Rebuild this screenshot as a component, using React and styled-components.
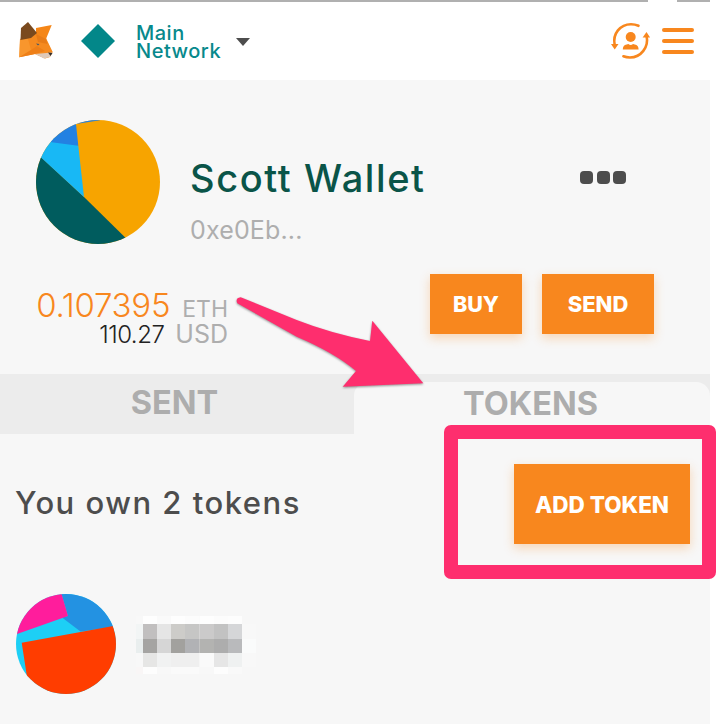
import React from "react";
import styled, { createGlobalStyle } from "styled-components";

const Global = createGlobalStyle`
  html, body { margin: 0; padding: 0; background: #fff; }
  * { box-sizing: border-box; }
`;

const ORANGE = "#f8871e";
const PINK = "#fe2e6e";
const font = `Inter, "Liberation Sans", sans-serif`;

const Page = styled.div`
  position: relative;
  width: 716px;
  height: 724px;
  overflow: hidden;
  background: #fff;
  font-family: ${font};
`;
const TopEdge = styled.div`
  display: flex;
  height: 2px;
`;
const EdgeSegment = styled.div`
  width: ${(p) => p.$w}px;
  height: 2px;
  background: ${(p) => (p.$on ? "#b0b0b0" : "transparent")};
`;
const Header = styled.header`
  display: flex;
  align-items: center;
  height: 78px;
  padding: 0 22px 0 19px;
`;
const LogoGroup = styled.div`
  display: flex;
  align-items: center;
`;
const FoxMark = styled.svg`
  filter: blur(0.35px);
`;
const DiamondMark = styled.svg`
  margin-left: 27px;
`;
const NetworkName = styled.div`
  margin-left: 21px;
  padding-top: 2px;
  width: 99px;
  font-size: 20px;
  line-height: 18px;
  font-weight: 500;
  color: #07898c;
  letter-spacing: 0.5px;
`;
const Caret = styled.div`
  width: 0;
  height: 0;
  margin-left: 1px;
  margin-top: 2px;
  border-left: 7px solid transparent;
  border-right: 7px solid transparent;
  border-top: 8px solid #4d4d4d;
`;
const HeaderActions = styled.div`
  display: flex;
  align-items: center;
  gap: 11px;
  margin-left: auto;
`;
const Burger = styled.div`
  display: flex;
  flex-direction: column;
  gap: 6.5px;
  width: 32px;
`;
const BurgerLine = styled.span`
  display: block;
  height: 4.5px;
  border-radius: 3px;
  background: ${ORANGE};
`;
const Main = styled.main`
  width: 710px;
  height: 644px;
  background: #f7f7f7;
`;
const AccountRow = styled.section`
  display: flex;
  align-items: flex-start;
  padding: 40px 0 0 36px;
  height: 194px;
`;
const Avatar = styled.svg`
  flex: none;
  width: ${(p) => p.$size}px;
  height: ${(p) => p.$size}px;
`;
const NameColumn = styled.div`
  margin-left: 30px;
  width: 390px;
  padding-top: 33px;
`;
const AccountName = styled.div`
  font-size: 38px;
  line-height: 50px;
  font-weight: 500;
  color: #0a5448;
  letter-spacing: 1.6px;
`;
const Address = styled.div`
  margin-top: 12px;
  font-size: 25px;
  line-height: 30px;
  color: #aeaeae;
  letter-spacing: 0.15px;
`;
const Dots = styled.div`
  display: flex;
  gap: 3.5px;
  margin-top: 51px;
`;
const Dot = styled.span`
  width: 13px;
  height: 13px;
  border-radius: 4px;
  background: #4d4d4d;
`;
const BalanceRow = styled.section`
  display: flex;
  align-items: flex-start;
  height: 100px;
`;
const Balance = styled.div`
  width: 228px;
  padding-top: 17px;
  margin-right: 202px;
  text-align: right;
`;
const BalanceLine = styled.div`
  display: flex;
  justify-content: flex-end;
  align-items: baseline;
  gap: ${(p) => p.$gap}px;
  height: ${(p) => p.$h}px;
  line-height: ${(p) => p.$h}px;
`;
const Amount = styled.span`
  font-size: ${(p) => p.$size}px;
  color: ${(p) => p.$color};
  letter-spacing: ${(p) => p.$ls}px;
  font-weight: 300;
`;
const Unit = styled.span`
  font-size: ${(p) => p.$size}px;
  color: #aeaeae;
  font-weight: 400;
`;
const ActionGroup = styled.div`
  display: flex;
  gap: 20px;
`;
const ActionButton = styled.button`
  display: flex;
  align-items: center;
  justify-content: center;
  flex: none;
  width: ${(p) => p.$w}px;
  height: ${(p) => p.$h}px;
  border: 0;
  padding: 0;
  background: ${ORANGE};
  color: #fff;
  font-family: ${font};
  font-size: ${(p) => p.$size}px;
  font-weight: 800;
  box-shadow: 0 4px 10px rgba(248, 135, 30, 0.3);
`;
const Tabs = styled.nav`
  display: grid;
  grid-template-columns: 354px 356px;
  height: 60px;
  background: #ececec;
`;
const Tab = styled.div`
  display: flex;
  justify-content: center;
  align-items: center;
  margin-top: ${(p) => (p.$active ? 8 : 0)}px;
  padding-bottom: ${(p) => (p.$active ? 10 : 3)}px;
  padding-right: ${(p) => (p.$active ? 3 : 5)}px;
  background: ${(p) => (p.$active ? "#f7f7f7" : "transparent")};
  border-radius: ${(p) => (p.$active ? "14px 14px 0 0" : "0")};
  font-size: 32.5px;
  font-weight: 700;
  color: #adadad;
`;
const TokenHeader = styled.div`
  display: flex;
  align-items: flex-start;
  height: 160px;
  padding: 30px 0 0 15px;
`;
const TokenCount = styled.div`
  width: 499px;
  padding-top: 20px;
  font-size: 31px;
  line-height: 38px;
  font-weight: 500;
  color: #4d4d4d;
  letter-spacing: 1.5px;
`;
const TokenRow = styled.div`
  display: flex;
  align-items: flex-start;
  padding-left: 16px;
  gap: 20px;
`;
const Redacted = styled.svg`
  flex: none;
  margin-top: 22px;
`;
const Highlight = styled.div`
  position: absolute;
  left: 444px;
  top: 425px;
  width: 272px;
  height: 154px;
  border: 14px solid ${PINK};
  border-radius: 7px;
  pointer-events: none;
`;
const ArrowOverlay = styled.svg`
  position: absolute;
  left: 230px;
  top: 290px;
  filter: drop-shadow(0 1px 1px rgba(60, 60, 60, 0.55));
`;

const Fox = () => (
  <FoxMark width="35" height="38" viewBox="19 24 35 38">
    <polygon points="20,41 36,34 46,40 52.7,54 50,59 45,60.5 35,56 19.3,59.3" fill="#f58a1f" />
    <polygon points="20,41 28,41 31,52 19.3,59.3" fill="#f8962d" />
    <polygon points="31,52 37,48 45,53 35,56 19.3,59.3" fill="#ee7f17" />
    <polygon points="36,30 51.7,27 46,41 36,36" fill="#f58617" />
    <polygon points="20.5,42 21,30 28,24 37,35 31,40" fill="#7a4a1e" />
    <polygon points="36,36 46,41 47.5,46 38,44" fill="#e87c17" />
    <polygon points="35,56 52,54.5 50,59 44,60.5" fill="#dfc9b8" />
    <polygon points="48,54.5 52.5,55 50.5,58" fill="#33302e" />
    <polygon points="36,45.5 39.5,46 38,47.5" fill="#44586a" />
  </FoxMark>
);

const Diamond = () => (
  <DiamondMark width="34" height="34" viewBox="0 0 34 34">
    <polygon points="17,0 34,17 17,34 0,17" fill="#038789" />
  </DiamondMark>
);

const SwitchIcon = () => (
  <svg width="40" height="38" viewBox="0 0 40 38" fill="none">
    <path d="M3.6 22.5 C1.6 12 9 2.2 20 2.2 c3 0 5 .5 7.5 1.6" stroke={ORANGE} strokeWidth="2.6" strokeLinecap="round" />
    <path d="M0 22 h7.5 l-3.8 5.6 z" fill={ORANGE} />
    <path d="M35.6 14 C38 25 30 35.5 19 35.5 c-2.6 0-4.6-.4-6.6-1.2" stroke={ORANGE} strokeWidth="2.6" strokeLinecap="round" />
    <path d="M31.6 15.5 h7.5 l-3.6-5.6 z" fill={ORANGE} />
    <circle cx="19.7" cy="15" r="5" fill={ORANGE} />
    <path d="M11.8 27.5 c0-3.2 1.4-4.4 3.8-5 l1.8-.6 c1.4 1.3 3.2 1.3 4.6 0 l1.8.6 c2.4.6 3.8 1.8 3.8 5 z" fill={ORANGE} />
  </svg>
);

const AccountPie = () => (
  <Avatar $size={124} viewBox="0 0 124 124">
    <defs>
      <clipPath id="acc"><circle cx="62" cy="62" r="62" /></clipPath>
    </defs>
    <g clipPath="url(#acc)">
      <rect width="124" height="124" fill="#f7a400" />
      <polygon points="48,77 -5,28 -20,80 -20,150 105,133" fill="#005c5e" />
      <polygon points="48,77 5.3,37.7 -3,30 10,14 42.3,25.7" fill="#18b8f5" />
      <polygon points="42.3,25.7 15.7,22.3 8,14 30,-5 64,-3 64,0.3 40,4" fill="#2381e2" />
    </g>
  </Avatar>
);

const TokenPie = () => (
  <Avatar $size={100} viewBox="0 0 100 100">
    <defs>
      <clipPath id="tok"><circle cx="50" cy="50" r="50" /></clipPath>
    </defs>
    <g clipPath="url(#tok)">
      <rect width="100" height="100" fill="#1dcff5" />
      <polygon points="45,-2 120,-2 120,30 64.5,37.5 46,23.5 52,22" fill="#2392e2" />
      <polygon points="1,40 -5,-2 45,-2 52,22" fill="#ff1d9c" />
      <polygon points="5.7,48.7 97.3,32 120,120 -5,120 10.7,81" fill="#ff3d00" />
    </g>
  </Avatar>
);

const mosaicCols = [136, 143, 157, 171, 185, 199.5, 214, 228, 242, 256];
const mosaicRows = [616, 624, 639, 653, 667, 674];
const mosaic = [
  ["#f8f8f8", "#fefefe", "#fafafa", "#fefefe", "#fcfcfc", "#fefefe", "#fcfcfc", "#fdfdfd", "#f7f7f7"],
  ["#f2f5f5", "#c1bfbf", "#e5e5e5", "#cdccc9", "#c6c6c5", "#cbcaca", "#c2c2c2", "#d5d6d8", "#f8f8f8"],
  ["#e9eeee", "#a5a4a2", "#d6d6d6", "#a2a19e", "#b1b2b5", "#b3b3b1", "#adadad", "#b9babc", "#fafbfb"],
  ["#f8f8f8", "#e6e6e5", "#f1f2f2", "#efefef", "#efefef", "#fafafa", "#e6e6e6", "#eff1f1", "#f8f8f8"],
  ["#f9f6f6", "#fdfdfd", "#f8f8f8", "#fafafa", "#fafafa", "#f8f8f8", "#fdfdfd", "#f9f9f9", "#f7f7f7"],
];

const RedactedName = () => (
  <Redacted width="120" height="58" viewBox="136 616 120 58">
    {mosaic.map((row, r) =>
      row.map((c, i) => (
        <rect
          key={`${r}-${i}`}
          x={mosaicCols[i]}
          y={mosaicRows[r]}
          width={mosaicCols[i + 1] - mosaicCols[i]}
          height={mosaicRows[r + 1] - mosaicRows[r]}
          fill={c}
        />
      ))
    )}
  </Redacted>
);

const Arrow = () => (
  <ArrowOverlay width="210" height="110" viewBox="230 290 210 110">
    <path
      d="M240.7 297.3 L296.7 320 Q330 333 370 341 L372.3 320.7 L423.3 383.3 L342.7 386.7 L356 371 Q335 353 296.7 336.7 L237.3 303.3 Q235 298 240.7 297.3 Z"
      fill={PINK}
    />
  </ArrowOverlay>
);

export default function App() {
  return (
    <Page>
      <Global />
      <TopEdge>
        <EdgeSegment $w={648} $on />
        <EdgeSegment $w={29} />
        <EdgeSegment $w={33} $on />
      </TopEdge>
      <Header>
        <LogoGroup>
          <Fox />
          <Diamond />
          <NetworkName>
            Main
            <br />
            Network
          </NetworkName>
          <Caret />
        </LogoGroup>
        <HeaderActions>
          <SwitchIcon />
          <Burger>
            <BurgerLine />
            <BurgerLine />
            <BurgerLine />
          </Burger>
        </HeaderActions>
      </Header>
      <Main>
        <AccountRow>
          <AccountPie />
          <NameColumn>
            <AccountName>Scott Wallet</AccountName>
            <Address>0xe0Eb...</Address>
          </NameColumn>
          <Dots>
            <Dot />
            <Dot />
            <Dot />
          </Dots>
        </AccountRow>
        <BalanceRow>
          <Balance>
            <BalanceLine $gap={12} $h={29}>
              <Amount $size={33} $color={ORANGE} $ls={-0.25}>0.107395</Amount>
              <Unit $size={23}>ETH</Unit>
            </BalanceLine>
            <BalanceLine $gap={11} $h={29}>
              <Amount $size={24} $color="#222" $ls={-0.5}>110.27</Amount>
              <Unit $size={25}>USD</Unit>
            </BalanceLine>
          </Balance>
          <ActionGroup>
            <ActionButton $w={92} $h={60} $size={21.5}>BUY</ActionButton>
            <ActionButton $w={112} $h={60} $size={22}>SEND</ActionButton>
          </ActionGroup>
        </BalanceRow>
        <Tabs>
          <Tab>SENT</Tab>
          <Tab $active>TOKENS</Tab>
        </Tabs>
        <TokenHeader>
          <TokenCount>You own 2 tokens</TokenCount>
          <ActionButton $w={176} $h={80} $size={22.5}>ADD TOKEN</ActionButton>
        </TokenHeader>
        <TokenRow>
          <TokenPie />
          <RedactedName />
        </TokenRow>
      </Main>
      <Highlight />
      <Arrow />
    </Page>
  );
}
